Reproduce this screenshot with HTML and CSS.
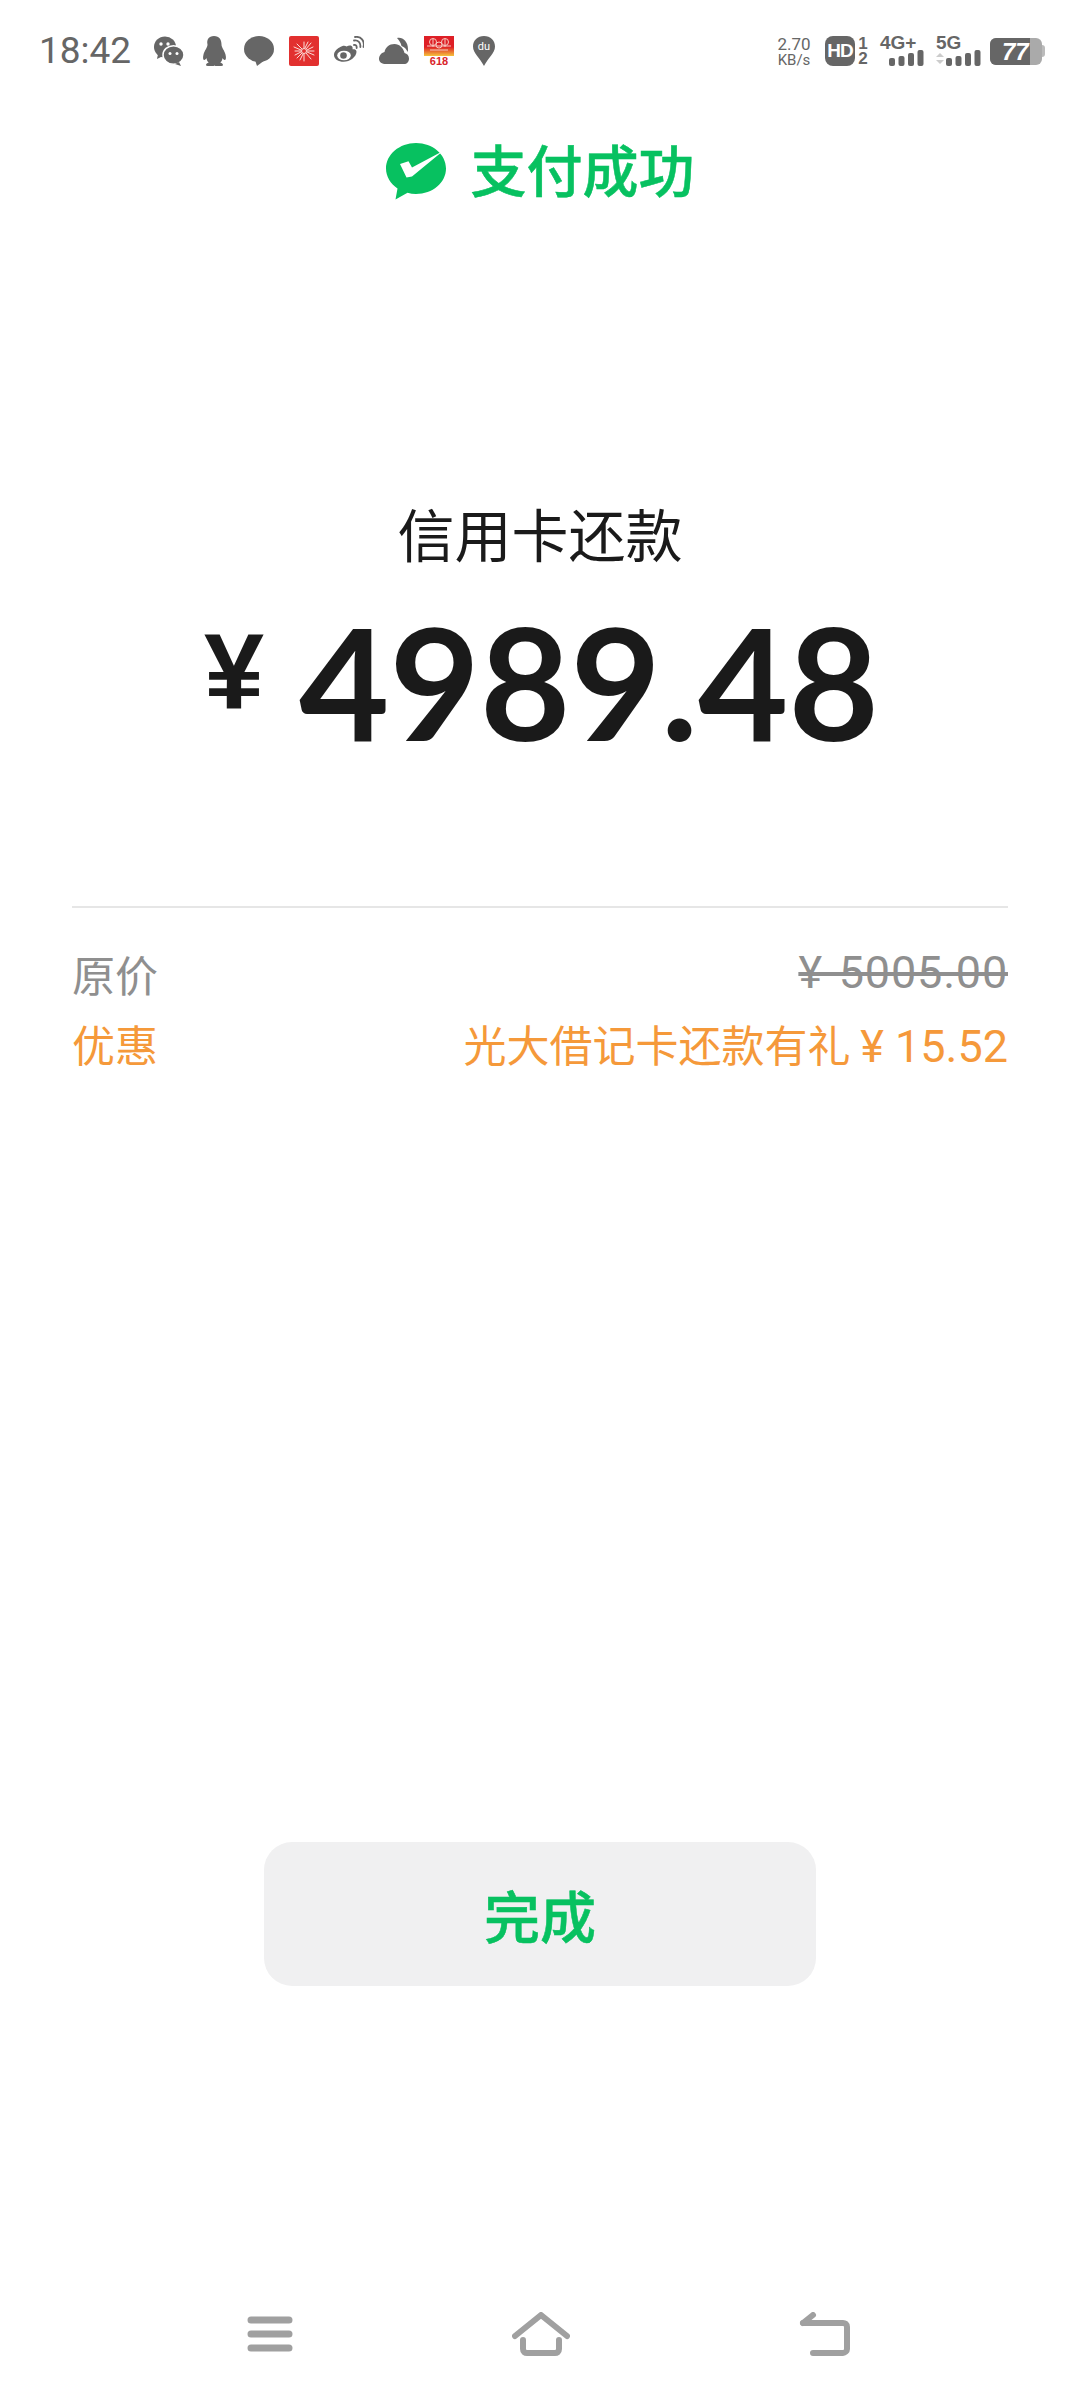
FILE: index.html
```html
<!DOCTYPE html>
<html lang="zh-CN">
<head>
    <meta charset="UTF-8">
    <meta name="viewport" content="width=device-width, initial-scale=1.0">
    <title>支付成功</title>
    <link rel="stylesheet" href="styles.css">
</head>
<body>
    <div class="status-bar">
        <div class="time">18:42</div>
        <div class="notify-icons">
            <svg class="s-icon" viewBox="0 0 30 30"><ellipse cx="11" cy="11" rx="11" ry="10.500" fill="#666"/><path d="M4 18l-1 5 6-3z" fill="#666"/><ellipse cx="19.500" cy="19" rx="10.500" ry="9.300" fill="#666" stroke="#fff" stroke-width="1.500"/><path d="M25 26l2 4-6-2z" fill="#666"/><circle cx="7" cy="8" r="1.700" fill="#fff"/><circle cx="14" cy="8" r="1.700" fill="#fff"/><circle cx="16" cy="17.500" r="1.500" fill="#fff"/><circle cx="23" cy="17.500" r="1.500" fill="#fff"/></svg>
            <svg class="s-icon" viewBox="0 0 30 30"><path d="M15 0c5.500 0 7.500 4 7.500 8.500 0 3 3 6 4 10 .8 3.200.5 5-.5 5.500-1 .3-2-1-2.500-2-.2 2-1 3.500-2.200 4.500 1.500.5 2.700 1.300 2.700 2.500 0 .7-1 1-3 1h-4c-1 0-1.500-.5-1.500-.5s-.5.5-1.500.5h-4c-2 0-3-.3-3-1 0-1.200 1.200-2 2.700-2.500-1.200-1-2-2.500-2.200-4.500-.5 1-1.500 2.300-2.500 2-1-.5-1.300-2.300-.5-5.500 1-4 4-7 4-10C7.500 4 9.500 0 15 0z" fill="#666"/></svg>
            <svg class="s-icon" viewBox="0 0 30 30"><ellipse cx="15" cy="13" rx="15" ry="13" fill="#666"/><path d="M11 24l2 6 8-6z" fill="#666"/></svg>
            <svg class="s-icon" viewBox="0 0 30 30"><rect width="30" height="30" rx="2" fill="#e2302f"/><g stroke="#fbdcd8" stroke-width="1" stroke-linecap="round"><path d="M15 12V6M15 18v7M12 15H6M18 15h7M13 13L8 8M17 13L22 7M13 17L8 22M17 17L22 23M12 14L5 11M18 16l7 3M14 18l-3 6M16 12l3-6M18 14l6-3M12 16l-6 3"/></g><circle cx="15" cy="15" r="2.500" fill="#e2302f" stroke="#fbdcd8" stroke-width="1"/></svg>
            <svg class="s-icon" viewBox="0 0 30 30"><path d="M12.500 10.500c3-1.500 5.500-1 6 .8.300 1 0 2 0 2s4-.8 4 2.500c0 5-6.500 10-13 10C4.500 25.800 0 23 0 19c0-3.500 3-6 5.500-7.500 3-2 5.500-2 7-1z" fill="#666"/><ellipse cx="10" cy="19.500" rx="6.800" ry="4.800" fill="#fff"/><circle cx="9.500" cy="19.500" r="3.300" fill="#666"/><path d="M20 4.500c4-.8 7 2 6.300 6.500M20 9c2-.3 3 1 2.600 3M21 1c6-1 10 4 8.500 10" fill="none" stroke="#666" stroke-width="1.800" stroke-linecap="round"/></svg>
            <svg class="s-icon" viewBox="0 0 30 30"><path d="M7 28h18c3 0 5-2 5-5.500 0-3-2-5-4.500-5.500-1-5-5-9-10-9-5.500 0-9 3.500-10 8C2 17 0 20 0 23c0 3 3 5 7 5z" fill="#666"/><path d="M18 2c5-1.500 11 3 11 11 0 1 0 2-.5 3-1-3-3-5-6-6-.5-3-2.500-6-4.500-8z" fill="#666"/></svg>
            <div class="tmall-icon">
                <svg class="tmall-top" viewBox="0 0 30 20"><defs><linearGradient id="tm" x1="0" y1="0" x2="0" y2="1"><stop offset="0.55" stop-color="#de1f26"/><stop offset="1" stop-color="#f5c33b"/></linearGradient></defs><rect width="30" height="20" fill="url(#tm)"/><g fill="none" stroke="#f6c9c0" stroke-width="1"><circle cx="9" cy="6" r="3.500"/><circle cx="21" cy="6" r="3.500"/><circle cx="15" cy="9" r="3"/><path d="M3 10h24M6 14h18M9 3v8M21 3v8"/></g></svg>
                <span class="tmall-num">618</span>
            </div>
            <svg class="s-icon" viewBox="0 0 30 30"><path d="M15 0C8.500 0 4 4.500 4 10.500 4 17 11 22 15 30c4-8 11-13 11-19.500C26 4.500 21.500 0 15 0z" fill="#666"/><text x="15" y="14" class="du-text">du</text></svg>
        </div>
        <div class="sys-icons">
            <div class="speed"><span class="speed-num">2.70</span><span class="speed-unit">KB/s</span></div>
            <div class="hd-group">
                <div class="hd-box">HD</div>
                <div class="sim-num"><span>1</span><span>2</span></div>
            </div>
            <div class="net net-4g">
                <div class="net-label">4G+</div>
                <svg class="bars" width="35" height="16" viewBox="0 0 35 16"><rect x="0" y="8" width="6" height="8" rx="2"/><rect x="9.500" y="6" width="6" height="10" rx="2"/><rect x="19" y="3" width="6" height="13" rx="2"/><rect x="28.500" y="0" width="6" height="16" rx="2"/></svg>
            </div>
            <div class="net net-5g">
                <div class="net-label">5G</div>
                <svg class="bars" width="45" height="16" viewBox="0 0 45 16"><path d="M0 7l4-4 4 4zM0 10l4 4 4-4z" fill="#ccc"/><rect x="10" y="8" width="6" height="8" rx="2"/><rect x="19.500" y="6" width="6" height="10" rx="2"/><rect x="29" y="3" width="6" height="13" rx="2"/><rect x="38.500" y="0" width="6" height="16" rx="2"/></svg>
            </div>
            <div class="battery">
                <div class="battery-body"><div class="battery-fill"></div><span class="battery-num">77</span></div>
                <div class="battery-nub"></div>
            </div>
        </div>
    </div>

    <div class="pay-title">
        <svg class="wx-logo" width="60" height="57" viewBox="0 0 60 57"><path d="M30 0C13.400 0 0 11.500 0 25.500 0 33.500 4.500 40.800 11.500 45.500L9.500 56.500 21.500 49.800C24.200 50.600 27 51 30 51c16.600 0 30-11.400 30-25.500S46.600 0 30 0z" fill="#07c160"/><path d="M14 21l8.500-2.800 3.500 6.300L57 8 26 33.500 20.500 34.500z" fill="#fff"/></svg>
        <span class="pay-title-text">支付成功</span>
    </div>

    <div class="pay-name">信用卡还款</div>
    <div class="pay-amount">
        <span class="yen">¥</span>
        <span class="digits">4989.48</span>
    </div>

    <div class="detail">
        <div class="detail-row row-gray">
            <span>原价</span>
            <span class="price old-price">¥ 5005.00</span>
        </div>
        <div class="detail-row row-orange">
            <span>优惠</span>
            <span>光大借记卡还款有礼 <span class="price">¥ 15.52</span></span>
        </div>
    </div>

    <div class="spacer"></div>

    <div class="done-btn">完成</div>

    <div class="nav-bar">
        <svg width="46" height="38" viewBox="0 0 46 38"><g stroke="#a0a0a0" stroke-width="7" stroke-linecap="round"><path d="M4 5h38M4 19h38M4 33h38" /></g></svg>
        <svg class="nav-home" width="58" height="44" viewBox="0 0 58 44"><g fill="none" stroke="#a0a0a0" stroke-width="6" stroke-linecap="round" stroke-linejoin="round"><path d="M3 24L29 3l26 21"/><path d="M11 28v9c0 3 2 4 4 4h28c2 0 4-1 4-4v-9"/></g></svg>
        <svg class="nav-back" width="52" height="44" viewBox="0 0 52 44"><g fill="none" stroke="#a0a0a0" stroke-width="6" stroke-linecap="round" stroke-linejoin="round"><path d="M4 11h40c2 0 4 1 4 4v22c0 2-2 4-4 4H14"/><path d="M4 11l10-8"/></g></svg>
    </div>
</body>
</html>
```

FILE: styles.css
```css
* {
    box-sizing: border-box;
}

body {
    margin: 0;
    width: 1080px;
    height: 2400px;
    display: flex;
    flex-direction: column;
    background-color: #fff;
    font-family: "Noto Sans CJK SC", "Noto Sans", sans-serif;
    overflow: hidden;
}

/* status bar */
.status-bar {
    display: flex;
    align-items: center;
    height: 30px;
    margin-top: 36px;
    padding-left: 39px;
    color: #666;
}

.time {
    width: 115px;
    font-family: Roboto, sans-serif;
    font-size: 37px;
    line-height: 30px;
}

.notify-icons {
    display: flex;
    align-items: center;
    gap: 15px;
}

.s-icon {
    width: 30px;
    height: 30px;
    display: block;
}

.du-text {
    font-family: Roboto, sans-serif;
    font-size: 11px;
    fill: #fff;
    text-anchor: middle;
}

.tmall-icon {
    width: 30px;
    height: 30px;
    display: flex;
    flex-direction: column;
    align-items: center;
}

.tmall-top {
    width: 30px;
    height: 20px;
    display: block;
}

.tmall-num {
    font-family: "Liberation Sans", sans-serif;
    font-size: 11px;
    line-height: 10px;
    font-weight: bold;
    color: #d9252b;
}

.sys-icons {
    display: flex;
    align-items: center;
    margin-left: 277px;
}

.speed {
    display: flex;
    flex-direction: column;
    align-items: center;
    width: 36px;
    font-family: Roboto, sans-serif;
}

.speed-num {
    font-size: 17px;
    line-height: 18px;
}

.speed-unit {
    font-size: 15px;
    line-height: 14px;
}

.hd-group {
    display: flex;
    align-items: center;
    margin-left: 13px;
}

.hd-box {
    width: 30px;
    height: 30px;
    border-radius: 8px;
    background-color: #666;
    color: #fff;
    font-family: "Liberation Sans", sans-serif;
    font-size: 19px;
    font-weight: bold;
    line-height: 30px;
    text-align: center;
    letter-spacing: -1px;
}

.sim-num {
    display: flex;
    flex-direction: column;
    align-items: center;
    width: 12px;
    margin-left: 2px;
    font-family: "Liberation Sans", sans-serif;
    font-size: 17px;
    font-weight: bold;
    line-height: 15px;
}

.net {
    display: flex;
    flex-direction: column;
    height: 30px;
}

.net-4g {
    width: 44px;
    margin-left: 11px;
}

.net-5g {
    width: 45px;
    margin-left: 12px;
}

.net-label {
    font-family: "Liberation Sans", sans-serif;
    font-size: 19px;
    font-weight: bold;
    line-height: 14px;
}

.bars {
    display: block;
    fill: #666;
}

.net-4g .bars {
    margin-left: 9px;
}

.battery {
    display: flex;
    align-items: center;
    margin-left: 9px;
}

.battery-body {
    position: relative;
    width: 52px;
    height: 27px;
    border-radius: 6px;
    background-color: #aaa;
    overflow: hidden;
}

.battery-fill {
    width: 40px;
    height: 27px;
    background-color: #666;
}

.battery-num {
    position: absolute;
    left: 12px;
    top: 0;
    color: #fff;
    font-family: "Liberation Sans", sans-serif;
    font-size: 24px;
    font-weight: bold;
    font-style: italic;
    line-height: 27px;
}

.battery-nub {
    width: 3px;
    height: 12px;
    border-radius: 0 3px 3px 0;
    background-color: #bbb;
}

/* title */
.pay-title {
    display: flex;
    align-items: center;
    justify-content: center;
    gap: 25px;
    margin-top: 73px;
    height: 64px;
    color: #07c160;
    font-size: 56px;
    font-weight: 500;
    line-height: 64px;
}

.pay-title-text {
    margin-top: -6px;
    -webkit-text-stroke: 0.5px #07c160;
}

.pay-name {
    margin-top: 293px;
    color: #1a1a1a;
    font-size: 57px;
    line-height: 72px;
    text-align: center;
}

.pay-amount {
    display: flex;
    justify-content: center;
    align-items: flex-start;
    gap: 35px;
    margin-top: 18px;
    padding-left: 3px;
    height: 190px;
    color: #1a1a1a;
}

.yen {
    margin-top: 25px;
    font-family: "Liberation Sans", sans-serif;
    font-size: 108px;
    font-weight: bold;
    line-height: 120px;
}

.digits {
    font-family: Lato, sans-serif;
    font-size: 156px;
    font-weight: 700;
    line-height: 190px;
}

.detail {
    margin: 130px 72px 0;
    padding-top: 30px;
    border-top: 2px solid #e6e6e6;
    font-size: 43px;
    line-height: 70px;
}

.detail-row {
    display: flex;
    justify-content: space-between;
}

.row-gray {
    color: #8f8f8f;
}

.row-orange {
    color: #f5993a;
}

.price {
    font-family: Roboto, sans-serif;
    font-size: 45px;
}

.old-price {
    word-spacing: 4px;
    letter-spacing: 0.8px;
    text-decoration: line-through;
}

.spacer {
    flex: 1;
}

.done-btn {
    width: 552px;
    height: 144px;
    margin: 0 auto;
    border-radius: 28px;
    background-color: #f0f0f1;
    color: #07c160;
    font-size: 56px;
    font-weight: 500;
    line-height: 144px;
    text-align: center;
    -webkit-text-stroke: 0.5px #07c160;
}

.nav-bar {
    display: flex;
    align-items: center;
    height: 44px;
    margin-top: 326px;
    margin-bottom: 44px;
    padding-left: 247px;
}

.nav-home {
    margin-left: 219px;
}

.nav-back {
    margin-left: 229px;
}
```
